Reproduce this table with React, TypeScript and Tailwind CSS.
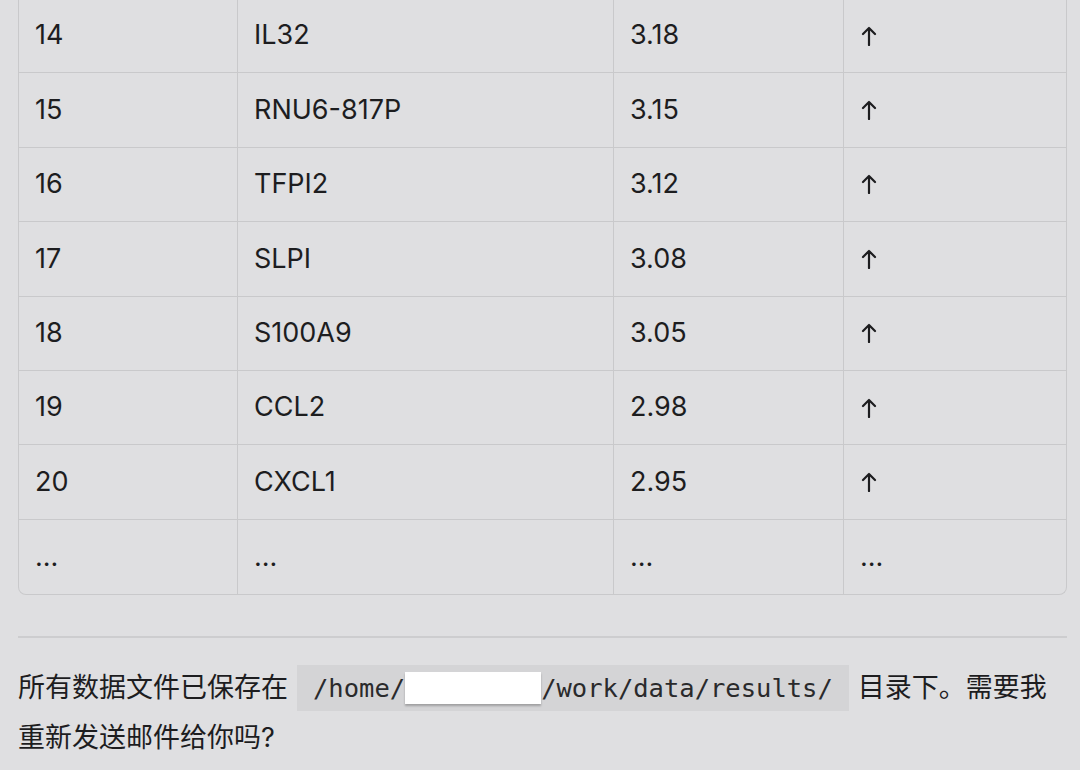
import React from "react";

const rows: [string, string, string, string][] = [
  ["14", "IL32", "3.18", "↑"],
  ["15", "RNU6-817P", "3.15", "↑"],
  ["16", "TFPI2", "3.12", "↑"],
  ["17", "SLPI", "3.08", "↑"],
  ["18", "S100A9", "3.05", "↑"],
  ["19", "CCL2", "2.98", "↑"],
  ["20", "CXCL1", "2.95", "↑"],
  ["...", "...", "...", "..."],
];

function Arrow() {
  return (
    <svg width="18" height="20" viewBox="0 0 18 20" className="inline-block">
      <path d="M9 19V2M3 8L9 2L15 8" fill="none" stroke="#1d1d1f" strokeWidth="2.2" strokeLinecap="round" strokeLinejoin="round" />
    </svg>
  );
}

export default function App() {
  return (
    <div
      className="w-[1080px] h-[770px] overflow-hidden bg-[#dfdfe1] text-[#1d1d1f] pl-[18px] pr-[13px]"
      style={{ fontFamily: 'Inter, "Noto Sans CJK SC", sans-serif' }}
    >
      <div className="mt-[-1px] border border-[#c9c9cb] border-t-0 rounded-b-[8px] overflow-hidden">
        {rows.map((r, i) => (
          <div
            key={i}
            className={`grid grid-cols-[219px_376px_230px_1fr] h-[74.4px] ${i < rows.length - 1 ? "border-b border-[#c9c9cb]" : ""}`}
          >
            {r.map((c, j) => (
              <div
                key={j}
                className={`flex items-center pl-[16px] text-[27px] ${j < 3 ? "border-r border-[#c9c9cb]" : ""}`}
              >
                {c === "↑" ? <Arrow /> : c}
              </div>
            ))}
          </div>
        ))}
      </div>
      <div className="mt-[41px] h-[2px] bg-[#cdcdcf]" />
      <p className="mt-[25px] text-[27px] leading-[50px]">
        所有数据文件已保存在
        <code
          className="mx-[9px] px-[16px] py-[8px] bg-[#d4d4d6] text-[25.5px] text-[#2a2a2c]"
          style={{ fontFamily: '"DejaVu Sans Mono", "Liberation Mono", monospace' }}
        >
          /home/
          <span className="inline-block w-[136px] h-[32px] bg-white align-[-7px] shadow-[0_2px_2px_rgba(0,0,0,0.25)]" />
          /work/data/results/
        </code>
        目录下。需要我重新发送邮件给你吗?
      </p>
    </div>
  );
}
